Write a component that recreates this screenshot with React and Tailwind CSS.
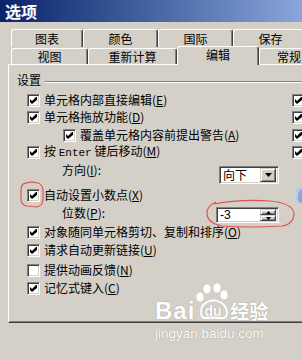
import React from 'react';

const Check = ({ on = true }) => (
  <span className="w-[13px] h-[13px] shrink-0 bg-white border border-t-[#808080] border-l-[#808080] border-r-white border-b-white shadow-[inset_1px_1px_0_#404040,inset_-1px_-1px_0_#d4d0c8] flex items-center justify-center">
    {on && (
      <svg width="7" height="7" viewBox="0 0 7 7">
        <polygon points="0,2 2,4 6,0 7,0 7,3 2,7 0,5" fill="#000" />
      </svg>
    )}
  </span>
);

const Tab = ({ w, children }) => (
  <div className={`shrink-0 flex items-center justify-center border-t border-l border-r border-t-white border-l-white border-r-[#404040] shadow-[inset_-1px_0_0_#808080] rounded-t-[3px] leading-none ${w}`}>
    {children}
  </div>
);

const Row = ({ mt = '', on = true, indent = false, right = null, children }) => (
  <div className={`h-[16px] flex items-center shrink-0 ${mt}`}>
    <div className={`w-[265px] shrink-0 flex items-center ${indent ? 'pl-[36px]' : ''}`}>
      <Check on={on} />
      <span className="ml-[4px] whitespace-nowrap leading-[16px]">{children}</span>
    </div>
    {right}
  </div>
);

const Arrow = ({ up }) => (
  <svg width="5" height="3" viewBox="0 0 5 3">
    <path d={up ? 'M0 3h5L2.5 0z' : 'M0 0h5L2.5 3z'} fill="#000" />
  </svg>
);

const Btn = 'bg-[#d4d0c8] border border-t-[#d4d0c8] border-l-[#d4d0c8] border-r-[#404040] border-b-[#404040] shadow-[inset_1px_1px_0_#fff,inset_-1px_-1px_0_#808080] flex items-center justify-center';
const Sunken = 'bg-white border border-t-[#808080] border-l-[#808080] border-r-white border-b-white shadow-[inset_1px_1px_0_#404040,inset_-1px_-1px_0_#d4d0c8]';

export default function App() {
  return (
    <div className="w-[302px] h-[360px] relative overflow-hidden bg-[#d4d0c8] text-black text-[12px] font-['Noto_Sans_CJK_SC',sans-serif]">
      {/* title bar */}
      <div className="h-[22px] flex items-center pl-[5px] bg-gradient-to-r from-[#0a246a] to-[#8aa6da] text-white font-bold text-[16px] leading-none">
        选项
      </div>

      {/* tabs */}
      <div className="pt-[7px]">
        <div className="flex h-[18px] ml-[11px]">
          <Tab w="w-[72px]">图表</Tab>
          <Tab w="w-[75px]">颜色</Tab>
          <Tab w="w-[75px]">国际</Tab>
          <Tab w="w-[75px]">保存</Tab>
        </div>
        <div className="flex h-[17px] ml-[11px]">
          <div className="flex mt-[1px] h-[16px]">
            <Tab w="w-[77px]">视图</Tab>
            <Tab w="w-[89px]">重新计算</Tab>
          </div>
          <div className="relative z-10 shrink-0 w-[82px] h-[19px] -mt-[1px] bg-[#d4d0c8] flex items-center justify-center border-t border-l border-r border-t-white border-l-white border-r-[#404040] shadow-[inset_-1px_0_0_#808080] rounded-t-[3px] leading-none pb-[2px]">
            编辑
          </div>
          <div className="flex mt-[1px] h-[16px]">
            <Tab w="w-[60px]">常规</Tab>
          </div>
        </div>
      </div>

      {/* panel */}
      <div className="h-[259px] ml-[8px] border-t border-l border-b border-t-white border-l-white border-b-[#404040] shadow-[inset_0_-1px_0_#808080] pl-[18px] pt-[7px] flex flex-col">
        <div className="h-[16px] -ml-[10px] flex items-center shrink-0">
          <span className="leading-[16px]">设置</span>
          <div className="flex-1 ml-[4px] mt-[4px] h-[2px] border-t border-b border-t-[#808080] border-b-white" />
        </div>

        <Row mt="mt-[4px]" right={<Check />}>单元格内部直接编辑(<u>E</u>)</Row>
        <Row mt="mt-[1px]" right={<Check />}>单元格拖放功能(<u>D</u>)</Row>
        <Row mt="mt-[2px]" indent right={<Check />}>覆盖单元格内容前提出警告(<u>A</u>)</Row>
        <Row mt="mt-[1px]" right={<Check />}>
          按 <span className="font-['Liberation_Mono',monospace] text-[11px]">Enter</span> 键后移动(<u>M</u>)
        </Row>

        <div className="h-[20px] mt-[5px] flex items-start shrink-0">
          <span className="ml-[35px] w-[157px] shrink-0 leading-[12px] -mt-[1px]">方向(<u>I</u>):</span>
          <div className={`w-[60px] h-[18px] mt-[1px] shrink-0 flex items-center pl-[3px] pr-[2px] ${Sunken}`}>
            <span className="flex-1 leading-[12px]">向下</span>
            <div className={`w-[16px] h-[14px] ${Btn}`}>
              <svg width="7" height="4" viewBox="0 0 7 4"><path d="M0 0h7L3.5 4z" fill="#000" /></svg>
            </div>
          </div>
        </div>

        <Row mt="mt-[2px]" right={<div className="ml-[4px] w-[12px] h-[16px] rounded-l-[7px] bg-[#8aa7dd] shadow-[inset_2px_2px_0_#b9ccef]" />}>
          自动设置小数点(<u>X</u>)
        </Row>

        <div className="h-[18px] mt-[3px] flex items-start shrink-0">
          <span className="ml-[35px] w-[154px] shrink-0 leading-[12px] mt-[1px]">位数(<u>P</u>):</span>
          <div className={`w-[63px] h-[16px] mt-[1px] shrink-0 flex items-center pl-[3px] pr-[2px] ${Sunken}`}>
            <span className="flex-1 leading-[12px] font-['Liberation_Sans',sans-serif]">-3</span>
            <div className="w-[16px] h-[12px] flex flex-col">
              <div className={`h-[6px] ${Btn}`}><Arrow up /></div>
              <div className={`h-[6px] ${Btn}`}><Arrow /></div>
            </div>
          </div>
        </div>

        <Row>对象随同单元格剪切、复制和排序(<u>O</u>)</Row>
        <Row mt="mt-[2px]">请求自动更新链接(<u>U</u>)</Row>
        <Row mt="mt-[4px]" on={false}>提供动画反馈(<u>N</u>)</Row>
        <Row mt="mt-[2px]">记忆式键入(<u>C</u>)</Row>
      </div>

      {/* red annotations */}
      <svg className="absolute inset-0 pointer-events-none" width="302" height="360">
        <path d="M23 184 Q30 181 38 183 Q42 184 43 190 L43 200 Q42 206 37 207 L27 206 Q21 205 21 199 L21 190 Q21 186 23 184" stroke="#e23c3c" strokeWidth="1.2" fill="none" opacity="0.85" />
        <path d="M214 204 Q240 199 270 201 Q292 203 294 213 Q294 224 282 226 Q250 228 222 226 Q207 223 207 213 Q207 206 216 202" stroke="#e23c3c" strokeWidth="1.2" fill="none" opacity="0.85" />
      </svg>

      {/* watermark */}
      <div className="absolute left-[155px] top-[284px] text-white [text-shadow:0_0_1px_rgba(0,0,0,0.35)]">
        <div className="flex items-end h-[36px]">
          <span className="font-['Liberation_Sans',sans-serif] font-bold text-[24px] leading-[18px] tracking-[1px]">Bai</span>
          <svg width="33" height="37" viewBox="0 0 33 37" className="ml-[1px]">
            <ellipse cx="4" cy="14" rx="3.5" ry="4.5" fill="#fff" />
            <ellipse cx="11" cy="6" rx="3.5" ry="4.5" fill="#fff" />
            <ellipse cx="21" cy="5" rx="3.5" ry="4.5" fill="#fff" />
            <ellipse cx="28" cy="12" rx="3.5" ry="4.5" fill="#fff" />
            <path d="M8 21 Q16 15 24 19 Q31 23 31 30 Q31 36 24 35 Q16 34 9 35 Q5 35 5 29 Q5 24 8 21z" fill="none" stroke="#fff" strokeWidth="1.8" />
            <text x="8.5" y="33" fontFamily="Liberation Sans, sans-serif" fontWeight="bold" fontSize="14" fill="#fff">du</text>
          </svg>
          <span className="font-bold text-[19px] leading-[18px] ml-[1px]">经验</span>
        </div>
        <div className="mt-[7px] font-['Liberation_Sans',sans-serif] text-[13.5px] leading-[14px]">jingyan.baidu.com</div>
      </div>
    </div>
  );
}
